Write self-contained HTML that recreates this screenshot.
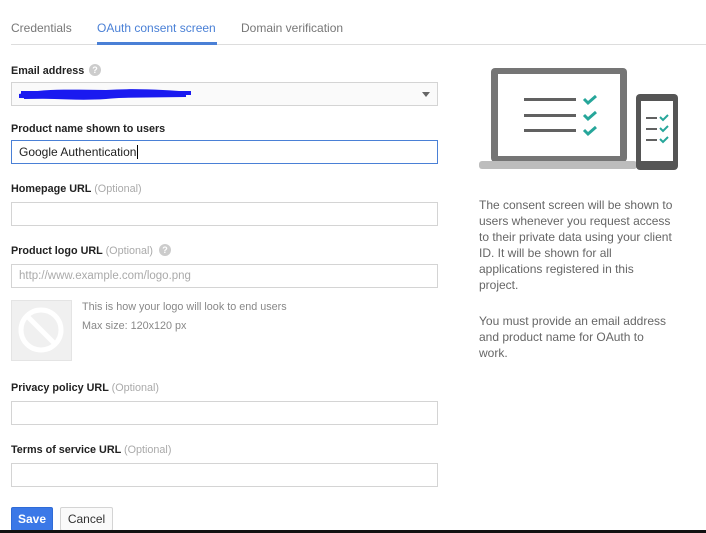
<!DOCTYPE html>
<html><head><style>
body{margin:0;width:706px;height:533px;background:#fff;font-family:"Liberation Sans",Arial,sans-serif;position:relative;overflow:hidden;color:#222}
.a{position:absolute}
.tab{font-size:12px;color:#777;top:21px}
.lbl{font-size:10.8px;font-weight:bold;color:#222;left:11px}
.lbl span{font-weight:normal;color:#aaa}
.inp{left:11px;width:425px;height:22px;border:1px solid #d4d4d4;background:#fff}
.rt{left:479px;font-size:12px;color:#666;line-height:16px;white-space:nowrap}
</style></head><body>
<div class="a tab" style="left:11px">Credentials</div>
<div class="a tab" style="left:97px;color:#4a80d6">OAuth consent screen</div>
<div class="a tab" style="left:241px">Domain verification</div>
<div class="a" style="left:11px;top:44px;width:695px;height:1px;background:#ddd"></div>
<div class="a" style="left:97px;top:42px;width:120px;height:3px;background:#4a80d6"></div>

<div class="a lbl" style="top:65px">Email address</div>
<div class="a" style="left:89px;top:64px;width:12px;height:12px;border-radius:50%;background:#ccc;color:#fff;font-size:9px;text-align:center;line-height:12px;font-weight:bold">?</div>
<div class="a inp" style="top:82px;background:#fafafa"></div>
<svg class="a" style="left:16px;top:84px" width="180" height="20"><path d="M3 10 C30 4,60 6,90 6 C120 4,150 6,175 8 C150 14,120 12,90 15 C60 17,30 14,3 14 Z" fill="#1a1af0"/><path d="M5 9 L175 9 M8 13 L170 11" stroke="#1a1af0" stroke-width="4"/></svg>
<div class="a" style="left:422px;top:92px;border:4px solid transparent;border-top:5px solid #666"></div>

<div class="a lbl" style="top:123px">Product name shown to users</div>
<div class="a inp" style="top:140px;border-color:#4a80d6;font-size:12px;line-height:22px;text-indent:7px">Google Authentication<span style="border-left:1px solid #000;margin-left:1px"></span></div>

<div class="a lbl" style="top:183px">Homepage URL <span>(Optional)</span></div>
<div class="a inp" style="top:202px"></div>

<div class="a lbl" style="top:245px">Product logo URL <span>(Optional)</span></div>
<div class="a" style="left:159px;top:244px;width:12px;height:12px;border-radius:50%;background:#ccc;color:#fff;font-size:9px;text-align:center;line-height:12px;font-weight:bold">?</div>
<div class="a inp" style="top:264px;font-size:11.5px;color:#aaa;line-height:22px;text-indent:7px">http://www.example.com/logo.png</div>

<div class="a" style="left:11px;top:300px;width:59px;height:59px;background:#f0f0f0;border:1px solid #e4e4e4"></div>
<svg class="a" style="left:17px;top:306px" width="48" height="48"><circle cx="24" cy="24" r="20" fill="none" stroke="#fff" stroke-width="5"/><path d="M10 10 L38 38" stroke="#fff" stroke-width="5"/></svg>
<div class="a" style="left:82px;top:301px;font-size:10.8px;color:#888">This is how your logo will look to end users</div>
<div class="a" style="left:82px;top:320px;font-size:10.8px;color:#888">Max size: 120x120 px</div>

<div class="a lbl" style="top:382px">Privacy policy URL <span>(Optional)</span></div>
<div class="a inp" style="top:401px"></div>
<div class="a lbl" style="top:444px">Terms of service URL <span>(Optional)</span></div>
<div class="a inp" style="top:463px"></div>

<div class="a" style="left:11px;top:507px;width:40px;height:22px;background:#3b78e7;border:1px solid #2f6bd6;border-radius:2px;color:#fff;font-size:12px;font-weight:bold;text-align:center;line-height:22px">Save</div>
<div class="a" style="left:60px;top:507px;width:51px;height:22px;background:#fafafa;border:1px solid #d4d4d4;border-radius:2px;color:#333;font-size:12px;text-align:center;line-height:22px">Cancel</div>
<div class="a" style="left:0;top:530px;width:706px;height:3px;background:#111"></div>

<svg class="a" style="left:479px;top:66px" width="200" height="104">
<rect x="12" y="2" width="136" height="94" rx="4" fill="#757575"/>
<rect x="19" y="8" width="122" height="82" fill="#fff"/>
<rect x="0" y="95" width="158" height="8" rx="3" fill="#bdbdbd"/>
<rect x="45" y="32" width="52" height="3" fill="#616161"/>
<rect x="45" y="48" width="52" height="3" fill="#616161"/>
<rect x="45" y="63" width="52" height="3" fill="#616161"/>
<g stroke="#26a69a" stroke-width="3" fill="none"><path d="M105 33 l4 4 l8 -7"/><path d="M105 49 l4 4 l8 -7"/><path d="M105 64 l4 4 l8 -7"/></g>
<rect x="157" y="28" width="42" height="76" rx="4" fill="#555"/>
<rect x="162" y="35" width="32" height="60" fill="#fff"/>
<rect x="167" y="51" width="11" height="2" fill="#616161"/>
<rect x="167" y="62" width="11" height="2" fill="#616161"/>
<rect x="167" y="73" width="11" height="2" fill="#616161"/>
<g stroke="#26a69a" stroke-width="2" fill="none"><path d="M181 51 l3 3 l5 -5"/><path d="M181 62 l3 3 l5 -5"/><path d="M181 73 l3 3 l5 -5"/></g>
</svg>

<div class="a rt" style="top:197px">The consent screen will be shown to<br>users whenever you request access<br>to their private data using your client<br>ID. It will be shown for all<br>applications registered in this<br>project.</div>
<div class="a rt" style="top:313px">You must provide an email address<br>and product name for OAuth to<br>work.</div>
</body></html>
